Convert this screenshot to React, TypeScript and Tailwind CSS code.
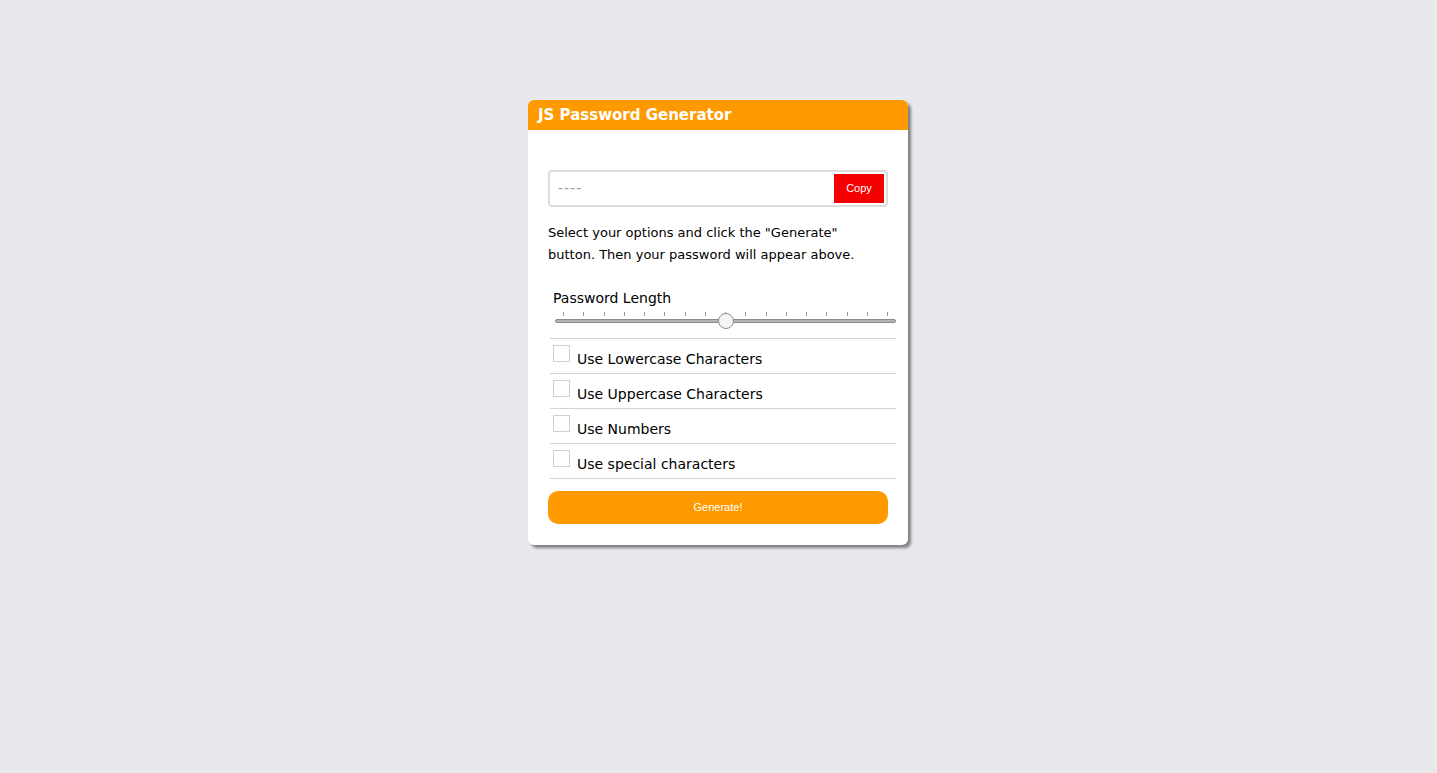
import { useState } from 'react';

const options = [
  'Use Lowercase Characters',
  'Use Uppercase Characters',
  'Use Numbers',
  'Use special characters',
];

const App = () => {
  const [checked, setChecked] = useState<boolean[]>([false, false, false, false]);
  const [length, setLength] = useState(50);

  return (
    <div className="min-h-screen bg-[#e8e9ed] pt-[100px] font-['DejaVu_Sans',sans-serif]">
      <div className="ml-[528px] w-[380px] rounded-[6px] bg-white shadow-[3px_3px_3px_rgba(0,0,0,0.45)] overflow-hidden">
        <div className="h-[30px] bg-[#ff9900] px-[10px] flex items-center pt-[1px]">
          <h1 className="text-white font-bold text-[15px]">JS Password Generator</h1>
        </div>

        <div className="px-[20px] pt-[40px] pb-[21px]">
          {/* password output */}
          <div className="h-[37px] rounded-[4px] border-2 border-[#dcdcdc] flex items-center pl-[8px] pr-[2px]">
            <span className="flex-1 text-[#999] text-[14px] tracking-[1px]">----</span>
            <button className="h-[29px] w-[50px] bg-[#f50000] text-white text-[11px] font-['Liberation_Sans',sans-serif]">Copy</button>
          </div>

          <p className="mt-[15px] text-[13px] leading-[22px] text-black">
            Select your options and click the "Generate" button. Then your password will appear above.
          </p>

          <div className="mt-[22px] pl-[5px] text-[14px] text-black">Password Length</div>

          {/* slider */}
          <div className="relative mt-[2px] ml-[7px] mr-[-8px] h-[18px]">
            <div className="absolute left-[8px] right-[8px] top-[1px] flex justify-between">
              {Array.from({ length: 17 }).map((_, i) => (
                <span key={i} className="block w-px h-[4px] bg-[#999]" />
              ))}
            </div>
            <div className="absolute left-0 right-0 top-[8px] h-[4px] rounded-full bg-[#b5b5b5] border border-[#8a8a8a]" />
            <div
              className="absolute top-[2px] w-[16px] h-[16px] rounded-full bg-[#f4f4f4] border border-[#8f8f8f] -translate-x-1/2"
              style={{ left: `${length}%` }}
            />
            <input
              type="range"
              min={0}
              max={100}
              value={length}
              onChange={(e) => setLength(Number(e.target.value))}
              className="absolute inset-0 w-full opacity-0 cursor-pointer"
            />
          </div>

          <div className="mt-[9px] ml-[2px] mr-[-8px] border-t border-[#d4d4d4]">
            {options.map((label, i) => (
              <label
                key={label}
                className="flex items-center h-[35px] border-b border-[#d4d4d4] pl-[3px] cursor-pointer"
              >
                <input
                  type="checkbox"
                  checked={checked[i]}
                  onChange={() => setChecked(checked.map((c, j) => (j === i ? !c : c)))}
                  className="appearance-none w-[17px] h-[17px] border border-[#d0d0d0] bg-white mt-[-5px] checked:bg-[#ff9900]"
                />
                <span className="ml-[7px] text-[14px] text-black mt-[6px]">{label}</span>
              </label>
            ))}
          </div>

          <button className="mt-[12px] w-full h-[33px] rounded-[10px] bg-[#ff9900] text-white text-[11px] font-['Liberation_Sans',sans-serif]">
            Generate!
          </button>
        </div>
      </div>
    </div>
  );
};

export default App;
